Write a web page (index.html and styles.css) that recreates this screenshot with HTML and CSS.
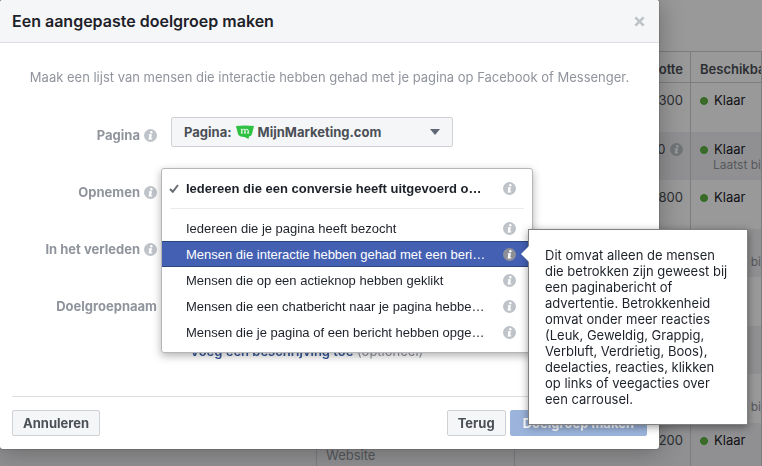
FILE: index.html
```html
<!DOCTYPE html>
<html lang="nl">
<head>
    <meta charset="UTF-8">
    <meta name="viewport" content="width=device-width, initial-scale=1.0">
    <title>Een aangepaste doelgroep maken</title>
    <link rel="stylesheet" href="styles.css">
</head>
<body>

<svg class="sprite" aria-hidden="true">
    <symbol id="info" viewBox="0 0 13 13">
        <circle cx="6.5" cy="6.5" r="6.5" fill="currentColor"/>
        <circle cx="7.3" cy="3.3" r="1.2" fill="#fff"/>
        <path d="M4.800 5.200h3.200L7.200 9.300h1v1.200H4.500L5.400 6.400H4.800z" fill="#fff"/>
    </symbol>
</svg>

<main class="page">
    <table class="audiences">
        <colgroup>
            <col class="col-name">
            <col class="col-type">
            <col class="col-size">
            <col>
        </colgroup>
        <thead>
            <tr><th></th><th></th><th class="size">Grootte</th><th>Beschikbaarheid</th></tr>
        </thead>
        <tbody>
            <tr><td></td><td></td><td class="size">300</td><td><span class="status">Klaar</span></td></tr>
            <tr><td></td><td></td><td class="size">0 <svg class="info"><use href="#info"/></svg></td><td><span class="status">Klaar</span><small>Laatst bijgewerkt</small></td></tr>
            <tr><td></td><td></td><td class="size">800</td><td><span class="status">Klaar</span></td></tr>
            <tr><td></td><td></td><td></td><td><span class="status">Klaar</span><small>Laatst bijgewerkt</small></td></tr>
            <tr><td></td><td></td><td></td><td></td></tr>
            <tr><td></td><td></td><td></td><td></td></tr>
            <tr><td></td><td></td><td></td><td><span class="status">Klaar</span><small>Laatst bijgewerkt</small></td></tr>
            <tr><td></td><td class="source">Website</td><td class="size">200</td><td><span class="status">Klaar</span></td></tr>
        </tbody>
    </table>
</main>

<div class="scrim"></div>

<div class="dialog" role="dialog" aria-labelledby="dialog-title">
    <header class="dialog-header">
        <h1 id="dialog-title">Een aangepaste doelgroep maken</h1>
        <button class="close" type="button" aria-label="Sluiten">
            <svg viewBox="0 0 11 11"><path d="M1.3 1.3l8.4 8.4M9.7 1.3L1.3 9.7"/></svg>
        </button>
    </header>

    <form class="dialog-body">
        <p class="intro">Maak een lijst van mensen die interactie hebben gehad met je pagina op Facebook of Messenger.</p>

        <div class="row">
            <label class="name" for="page">Pagina <svg class="info"><use href="#info"/></svg></label>
            <div class="picker">
                <span>Pagina:</span>
                <svg class="logo" viewBox="0 0 18 14">
                    <path d="M0 1Q9 0 18 1L16 9Q15.500 11 13 11.500L12.500 14L8.500 12Q3 12 2 9z" fill="#2fc142"/>
                    <path d="M5.800 8V4.500M5.800 5.500Q7.500 3.200 9 5V8M9 5.300Q11 3.200 12.200 5V8M4.800 8h2M8 8h2M11.200 8h2M4.800 4.200h1" fill="none" stroke="#fff"/>
                </svg>
                <select id="page">
                    <option>MijnMarketing.com</option>
                </select>
                <svg class="caret" viewBox="0 0 10 6"><path d="M0 0h10L5 6z"/></svg>
            </div>
        </div>

        <div class="row">
            <span class="name" id="include-label">Opnemen <svg class="info"><use href="#info"/></svg></span>
            <div class="menu" role="menu" aria-labelledby="include-label">
                <button class="item selected" type="button" role="menuitemradio" aria-checked="true">
                    <svg class="check" viewBox="0 0 10 9"><path d="M1 5l2.800 2.800L9 1"/></svg>
                    <span>Iedereen die een conversie heeft uitgevoerd o…</span>
                    <svg class="info"><use href="#info"/></svg>
                </button>
                <hr>
                <button class="item" type="button" role="menuitemradio" aria-checked="false">
                    <span>Iedereen die je pagina heeft bezocht</span>
                    <svg class="info"><use href="#info"/></svg>
                </button>
                <button class="item active" type="button" role="menuitemradio" aria-checked="false" aria-describedby="tip">
                    <span>Mensen die interactie hebben gehad met een beri…</span>
                    <svg class="info"><use href="#info"/></svg>
                </button>
                <button class="item" type="button" role="menuitemradio" aria-checked="false">
                    <span>Mensen die op een actieknop hebben geklikt</span>
                    <svg class="info"><use href="#info"/></svg>
                </button>
                <button class="item" type="button" role="menuitemradio" aria-checked="false">
                    <span>Mensen die een chatbericht naar je pagina hebbe…</span>
                    <svg class="info"><use href="#info"/></svg>
                </button>
                <button class="item" type="button" role="menuitemradio" aria-checked="false">
                    <span>Mensen die je pagina of een bericht hebben opge…</span>
                    <svg class="info"><use href="#info"/></svg>
                </button>
                <div class="tooltip" id="tip" role="tooltip">Dit omvat alleen de mensen die betrokken zijn geweest bij een paginabericht of advertentie. Betrokkenheid omvat onder meer reacties (Leuk, Geweldig, Grappig, Verbluft, Verdrietig, Boos), deelacties, reacties, klikken op links of veegacties over een carrousel.</div>
            </div>
        </div>

        <div class="row">
            <label class="name" for="days">In het verleden <svg class="info"><use href="#info"/></svg></label>
            <input class="field" id="days" type="text">
        </div>

        <div class="row">
            <label class="name" for="audience">Doelgroepnaam</label>
            <input class="field" id="audience" type="text">
        </div>

        <p class="extra"><a href="#">Voeg een beschrijving toe</a> (optioneel)</p>
    </form>

    <footer class="dialog-footer">
        <button class="btn" type="button">Annuleren</button>
        <button class="btn back" type="button">Terug</button>
        <button class="btn primary" type="button" disabled>Doelgroep maken</button>
    </footer>
</div>

</body>
</html>
```
FILE: styles.css
```css
*,
*::before {
    box-sizing: border-box;
}

body {
    margin: 0;
    min-height: 100vh;
    overflow: hidden;
    font-family: Inter, "Liberation Sans", sans-serif;
    font-size: 13px;
    color: #1d2129;
    background: #fff;
}

button, input, select {
    font: inherit;
}

.sprite {
    position: absolute;
    width: 0;
    height: 0;
}

.info {
    width: 13px;
    height: 13px;
    flex: none;
    color: #bec3c9;
}

/* audience table behind the dialog */
.page {
    height: 100vh;
    padding-top: 51px;
    overflow: hidden;
}

.audiences {
    width: 100%;
    table-layout: fixed;
    border-collapse: separate;
    border-spacing: 0;
}

.col-name {
    width: 317px;
}

.col-type {
    width: 198px;
}

.col-size {
    width: 176px;
}

.audiences th,
.audiences td {
    padding: 8px 9px;
    border-right: 1px solid #ced0d4;
    text-align: left;
    vertical-align: top;
    line-height: 18px;
    white-space: nowrap;
    overflow: hidden;
}

.audiences th {
    height: 32px;
    padding: 8px 9px 4px;
    border-top: 1px solid #ced0d4;
    border-bottom: 1px solid #ced0d4;
    color: #4b4f56;
    font-weight: 600;
}

.audiences tbody tr {
    height: 48px;
}

.audiences tbody tr:nth-child(odd) {
    height: 49px;
}

.audiences tbody tr:nth-child(even) {
    background: #f0f1f3;
}

.audiences .size {
    padding-right: 7px;
    text-align: right;
    color: #4b4f56;
}

.audiences .size .info {
    margin-left: 1px;
    vertical-align: -2px;
}

.audiences .source {
    padding-top: 23px;
    color: #90949c;
}

.status::before {
    content: "";
    display: inline-block;
    width: 8px;
    height: 8px;
    margin-right: 6px;
    border-radius: 50%;
    background: #6aae4a;
    border: 1px solid #42b72a;
}

.audiences small {
    display: block;
    padding-left: 13px;
    font-size: 12px;
    line-height: 14px;
    color: #90949c;
}

.scrim {
    position: fixed;
    inset: 0;
    background: rgba(0, 0, 0, 0.4);
}

/* dialog */
.dialog {
    position: absolute;
    top: 0;
    left: 0;
    width: 100%;
    max-width: 659px;
    background: #fff;
    border-radius: 3px;
    box-shadow: 0 2px 26px rgba(0, 0, 0, 0.3), 0 0 0 1px rgba(0, 0, 0, 0.1);
}

.dialog-header {
    display: flex;
    align-items: center;
    justify-content: space-between;
    height: 43px;
    padding: 0 14px 0 12px;
    background: #f5f6f7;
    border-bottom: 1px solid #dddfe2;
    border-radius: 3px 3px 0 0;
}

.dialog-header h1 {
    margin: 0;
    font-size: 16px;
    font-weight: 600;
}

.close {
    display: flex;
    padding: 0;
    border: 0;
    background: none;
}

.close svg {
    width: 11px;
    height: 11px;
    fill: none;
    stroke: #bec3c9;
    stroke-width: 2.6;
}

.dialog-body {
    padding: 24px 12px 0;
}

.intro {
    margin: 0 0 30px;
    line-height: 20px;
    text-align: center;
    color: #90949c;
}

.row {
    display: grid;
    grid-template-columns: 145px 1fr;
    column-gap: 14px;
    position: relative;
    height: 57px;
}

.name {
    display: flex;
    align-items: center;
    justify-content: flex-end;
    gap: 4px;
    height: 36px;
    font-weight: 700;
    color: #90949c;
}

.picker {
    display: flex;
    align-items: center;
    width: 282px;
    height: 30px;
    padding: 0 12px;
    border: 1px solid #ced0d4;
    border-radius: 2px;
    background: #f5f6f7;
    color: #4b4f56;
    font-weight: 700;
}

.logo {
    width: 18px;
    height: 14px;
    margin: 0 4px;
}

.picker select {
    flex: 1;
    min-width: 0;
    padding: 0;
    border: 0;
    appearance: none;
    background: none;
    color: inherit;
}

.caret {
    width: 10px;
    height: 6px;
    fill: #606776;
}

.field {
    width: 282px;
    height: 30px;
    border: 1px solid #ced0d4;
}

.extra {
    margin: -4px 0 0;
    padding-left: 178px;
    line-height: 20px;
    color: #90949c;
}

.extra a {
    color: #365899;
    font-weight: 600;
    text-decoration: none;
}

/* open menu */
.menu {
    position: absolute;
    z-index: 1;
    top: -6px;
    left: 149px;
    width: 372px;
    padding: 6px 0 7px;
    border: 1px solid #b4b6ba;
    border-radius: 3px;
    background: #fff;
    box-shadow: 0 3px 8px rgba(0, 0, 0, 0.3);
    font-family: "Liberation Sans", sans-serif;
}

.menu hr {
    margin: 7px 8px 6px;
    border: 0;
    border-top: 1px solid #e9ebee;
}

.item {
    display: flex;
    align-items: center;
    justify-content: space-between;
    position: relative;
    width: 100%;
    height: 26px;
    padding: 0 16px 0 24px;
    border: 1px solid transparent;
    border-width: 1px 0;
    background: none;
    color: #1d2129;
    text-align: left;
    white-space: nowrap;
}

.item.selected {
    font-weight: bold;
}

.check {
    position: absolute;
    left: 7px;
    width: 10px;
    height: 9px;
    fill: none;
    stroke: #6a6d73;
    stroke-width: 2;
}

.item.active {
    border-color: #29487d;
    background: #4460b3;
    color: #fff;
}

.item.active .info {
    color: #8d8f98;
}

.tooltip {
    position: absolute;
    top: 60px;
    left: 366px;
    width: 220px;
    padding: 17px 16px;
    border: 1px solid #808080;
    background: #fff;
    box-shadow: 0 2px 8px rgba(0, 0, 0, 0.4);
    font-family: Inter, "Liberation Sans", sans-serif;
    line-height: 16px;
}

.tooltip::before {
    content: "";
    position: absolute;
    top: 16px;
    left: -8px;
    border: 8px solid transparent;
    border-left: 0;
    border-right-color: #fff;
}

/* footer */
.dialog-footer {
    display: flex;
    gap: 4px;
    margin: 35px 12px 0;
    padding: 13px 0;
    border-top: 1px solid #dddfe2;
}

.btn {
    height: 26px;
    padding: 0 10px;
    border: 1px solid #ced0d4;
    border-radius: 2px;
    background: #f5f6f7;
    color: #4b4f56;
    font-weight: 700;
    white-space: nowrap;
}

.back {
    margin-left: auto;
}

.primary {
    padding: 0 12px;
    border-color: #9cb4dc;
    background: #9cb4dc;
    color: #fff;
}
```
